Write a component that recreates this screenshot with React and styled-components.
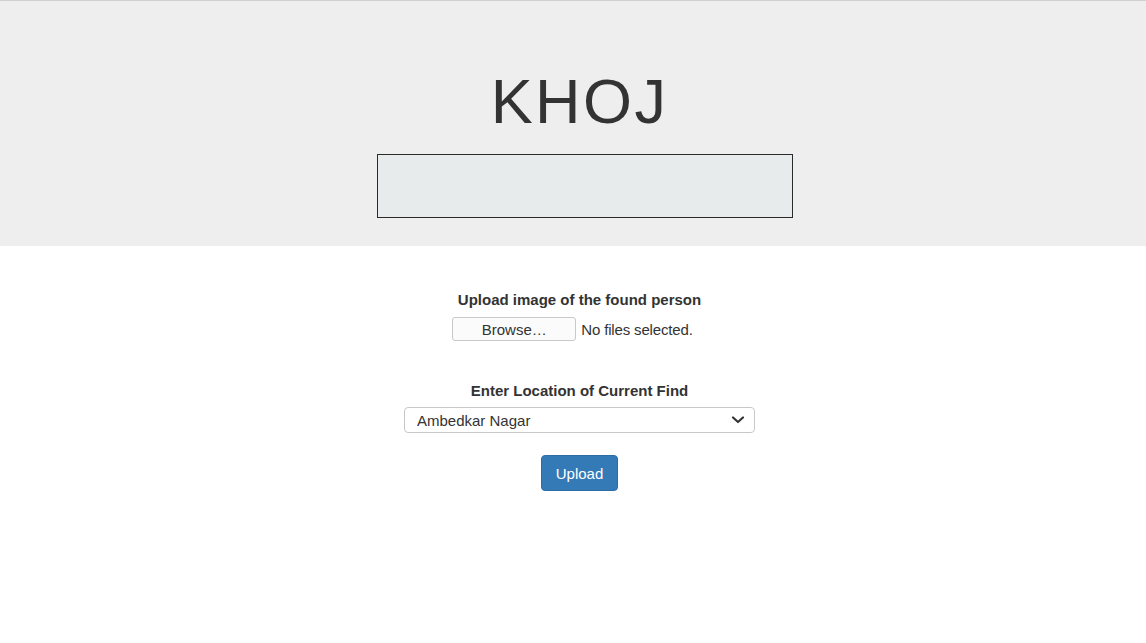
import React from "react";
import styled, { createGlobalStyle } from "styled-components";

const Global = createGlobalStyle`
  html, body { margin: 0; padding: 0; background: #fff; }
  body { font-family: "Liberation Sans", Arial, sans-serif; font-size: 15px; color: #333; }
  * { box-sizing: border-box; }
`;

const Page = styled.div`
  border-top: 1px solid #cfcfcf;
  min-height: 643px;
`;

const Jumbotron = styled.header`
  background: #eeeeee;
  height: 245px;
  display: flex;
  flex-direction: column;
  align-items: center;
  padding-top: 66px;
  padding-left: 13px;
`;

const Title = styled.h1`
  margin: 0;
  font-family: "Liberation Sans", Arial, sans-serif;
  font-size: 63px;
  font-weight: 400;
  line-height: 69px;
  color: #333;
  letter-spacing: 2.4px;
`;

const EmptyBox = styled.div`
  margin-top: 18px;
  margin-left: 11px;
  width: 416px;
  height: 64px;
  background: #e8ebeb;
  border: 1px solid #2a2a2a;
`;

const Form = styled.form`
  display: flex;
  flex-direction: column;
  align-items: center;
  padding-top: 43px;
  padding-left: 13px;
`;

const Label = styled.label`
  font-weight: 700;
  font-size: 15px;
  line-height: 22px;
  color: #333;
  margin-bottom: ${(p) => p.$gap}px;
`;

const FileRow = styled.div`
  display: flex;
  align-items: center;
  gap: 5px;
  margin-left: -14px;
  margin-bottom: 39px;
`;

const BrowseButton = styled.button`
  width: 124px;
  height: 24px;
  background: #fbfbfb;
  border: 1px solid #c9c9c9;
  border-radius: 3px;
  font-family: "Liberation Sans", Arial, sans-serif;
  font-size: 15px;
  color: #333;
  padding: 0;
  cursor: pointer;
`;

const FileStatus = styled.span`
  font-size: 15px;
  color: #333;
  letter-spacing: -0.15px;
`;

const SelectWrap = styled.div`
  position: relative;
  width: 351px;
  height: 26px;
  margin-bottom: 22px;
`;

const Select = styled.select`
  appearance: none;
  -webkit-appearance: none;
  width: 100%;
  height: 100%;
  border: 1px solid #c8c8c8;
  border-radius: 4px;
  background: #fff;
  padding: 0 12px;
  font-family: "Liberation Sans", Arial, sans-serif;
  font-size: 15px;
  color: #333;
  outline: none;
`;

const Chevron = styled.svg`
  position: absolute;
  right: 10px;
  top: 8px;
  pointer-events: none;
`;

const SubmitButton = styled.button`
  width: 77px;
  height: 36px;
  background: #337ab7;
  border: 1px solid #2e6da4;
  border-radius: 4px;
  color: #fff;
  font-family: "Liberation Sans", Arial, sans-serif;
  font-size: 15px;
  padding: 0;
  cursor: pointer;
`;

export default function App() {
  return (
    <Page>
      <Global />
      <Jumbotron>
        <Title>KHOJ</Title>
        <EmptyBox />
      </Jumbotron>
      <Form onSubmit={(e) => e.preventDefault()}>
        <Label $gap={6}>Upload image of the found person</Label>
        <FileRow>
          <BrowseButton type="button">Browse…</BrowseButton>
          <FileStatus>No files selected.</FileStatus>
        </FileRow>
        <Label $gap={5}>Enter Location of Current Find</Label>
        <SelectWrap>
          <Select defaultValue="Ambedkar Nagar">
            <option>Ambedkar Nagar</option>
            <option>Agra</option>
            <option>Aligarh</option>
          </Select>
          <Chevron width="14" height="10" viewBox="0 0 14 10">
            <path d="M2 2.5 L7 7 L12 2.5" fill="none" stroke="#333" strokeWidth="2.2" strokeLinecap="round" strokeLinejoin="round" />
          </Chevron>
        </SelectWrap>
        <SubmitButton type="submit">Upload</SubmitButton>
      </Form>
    </Page>
  );
}
